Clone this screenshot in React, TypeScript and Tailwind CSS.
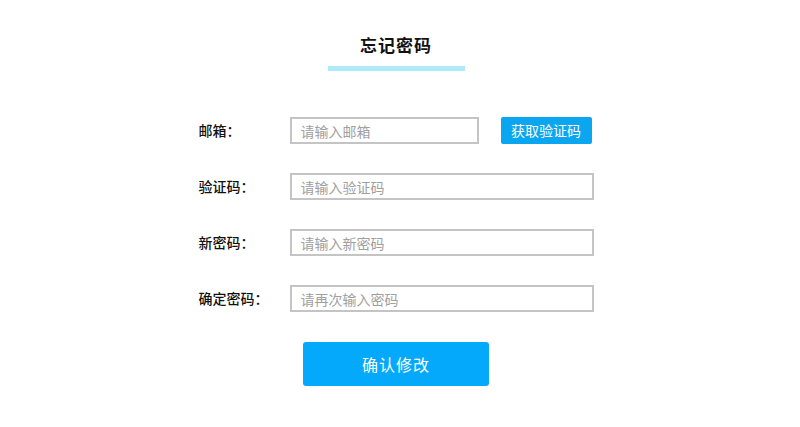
const rows = [
  { label: "邮箱：", placeholder: "请输入邮箱", short: true },
  { label: "验证码：", placeholder: "请输入验证码" },
  { label: "新密码：", placeholder: "请输入新密码" },
  { label: "确定密码：", placeholder: "请再次输入密码" },
];

export default function App() {
  return (
    <div
      className="h-[427px] w-[800px] bg-white"
      style={{ fontFamily: '"Noto Sans CJK SC", "Noto Sans", sans-serif' }}
    >
      <div className="flex w-[792px] flex-col items-center">
        <h1 className="mt-[33px] text-[17px] font-bold leading-[24px] tracking-[1px] text-[#111]">
          忘记密码
        </h1>
        <div className="mt-[9px] h-[5px] w-[137px] bg-[#b0eaf8]" />

        <div className="mt-[46px] flex w-[395px] flex-col gap-[29px]">
          {rows.map((row) => (
            <div key={row.label} className="flex h-[27px] items-center">
              <span className="w-[91px] text-[14px] font-medium text-[#111]">{row.label}</span>
              <input
                placeholder={row.placeholder}
                className={`h-[27px] border-2 border-[#c4c4c4] px-[9px] text-[14px] outline-none placeholder:text-[#a0a0a0] ${
                  row.short ? "w-[189px]" : "w-[304px]"
                }`}
              />
              {row.short && (
                <button className="ml-[22px] h-[27px] w-[91px] rounded-[2px] bg-[#0aa6f0] text-[14px] text-white">
                  获取验证码
                </button>
              )}
            </div>
          ))}
        </div>

        <button className="mt-[30px] h-[44px] w-[186px] rounded-[3px] bg-[#04a9fb] text-[16px] tracking-[1px] text-white">
          确认修改
        </button>
      </div>
    </div>
  );
}
